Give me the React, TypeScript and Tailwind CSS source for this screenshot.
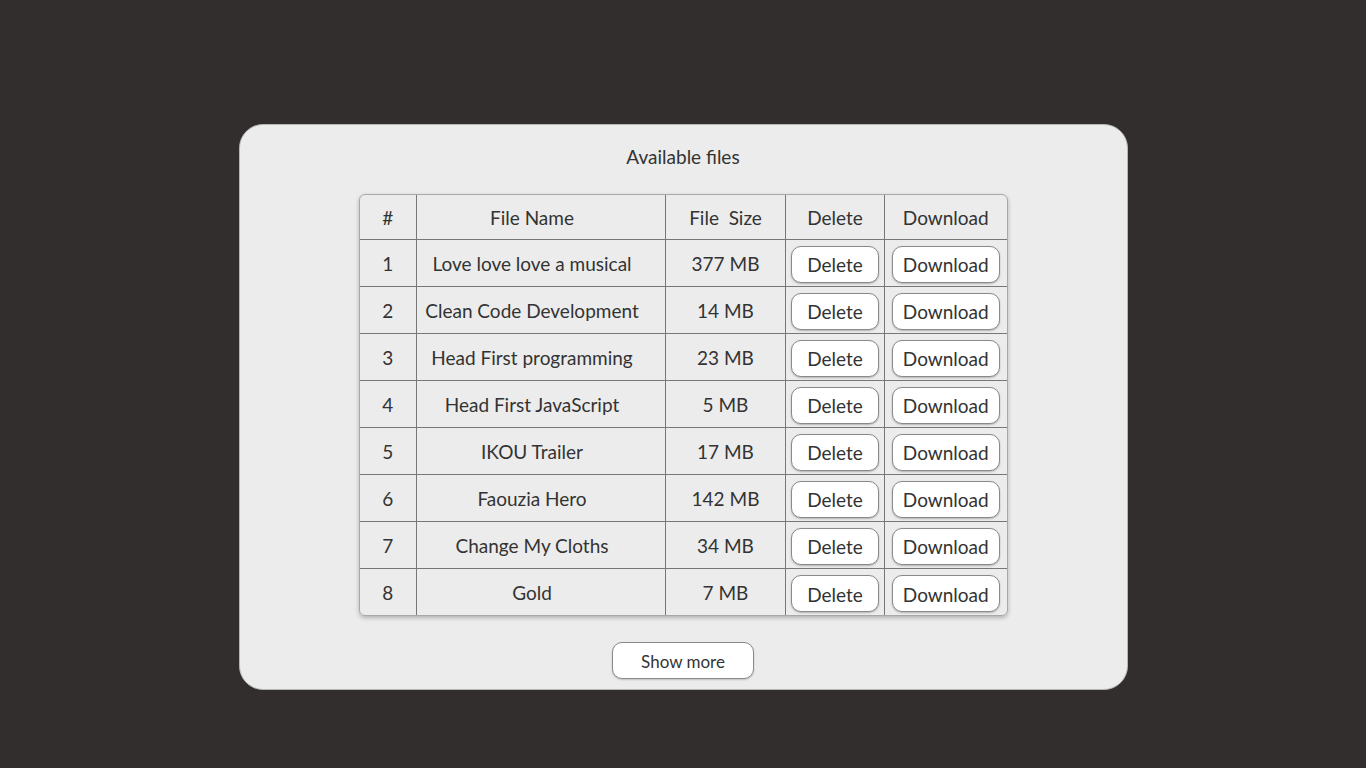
import React from 'react';

const files = [
  { id: 1, name: 'Love love love a musical', size: '377 MB' },
  { id: 2, name: 'Clean Code Development', size: '14 MB' },
  { id: 3, name: 'Head First programming', size: '23 MB' },
  { id: 4, name: 'Head First JavaScript', size: '5 MB' },
  { id: 5, name: 'IKOU Trailer', size: '17 MB' },
  { id: 6, name: 'Faouzia Hero', size: '142 MB' },
  { id: 7, name: 'Change My Cloths', size: '34 MB' },
  { id: 8, name: 'Gold', size: '7 MB' },
];

const btn = 'h-[37px] rounded-[10px] border border-[#8a8a8a] bg-white text-[19px] text-[#333] shadow-[0_1px_2px_rgba(0,0,0,0.25)]';

export default function App() {
  return (
    <main className="flex min-h-screen items-start justify-center bg-[#322e2d] pt-[124px] font-['Lato',sans-serif] text-[#333]">
      <section className="flex h-[566px] w-[889px] flex-col items-center rounded-[24px] border border-[#b5b5b5] bg-[#ececec]">
        <h1 className="mt-[19px] text-[19px] leading-[26px]">Available files</h1>
        <div className="mt-[24px] overflow-hidden rounded-[6px] border border-[#a8a8a8] shadow-[0_2px_4px_rgba(0,0,0,0.25)]">
          <table className="table-fixed border-collapse text-[19px]">
            <colgroup>
              <col className="w-[57px]" />
              <col className="w-[249px]" />
              <col className="w-[120px]" />
              <col className="w-[99px]" />
              <col className="w-[122px]" />
            </colgroup>
            <thead>
              <tr className="h-[44px]">
                <th className="border-r border-b border-[#777] pt-[3px] font-normal">#</th>
                <th className="border-r border-b border-[#777] pt-[3px] pr-[18px] font-normal">File Name</th>
                <th className="border-r border-b border-[#777] pt-[3px] font-normal whitespace-pre">File  Size</th>
                <th className="border-r border-b border-[#777] pt-[3px] font-normal">Delete</th>
                <th className="border-b border-[#777] pt-[3px] font-normal">Download</th>
              </tr>
            </thead>
            <tbody>
              {files.map((f, i) => {
                const last = i === files.length - 1;
                const b = last ? '' : 'border-b';
                return (
                  <tr key={f.id} className="h-[47px]">
                    <td className={`border-r ${b} border-[#777] pt-[3px] text-center`}>{f.id}</td>
                    <td className={`border-r ${b} border-[#777] pt-[3px] pr-[18px] text-center`}>{f.name}</td>
                    <td className={`border-r ${b} border-[#777] pt-[3px] text-center`}>{f.size}</td>
                    <td className={`border-r ${b} border-[#777] pt-[4px] text-center`}>
                      <button className={`${btn} w-[88px] pt-[2px]`}>Delete</button>
                    </td>
                    <td className={`${b} border-[#777] pt-[4px] text-center`}>
                      <button className={`${btn} w-[108px] pt-[2px]`}>Download</button>
                    </td>
                  </tr>
                );
              })}
            </tbody>
          </table>
        </div>
        <button className="mt-[26px] h-[37px] w-[142px] rounded-[10px] border border-[#8a8a8a] bg-white pt-[2px] text-[17px] text-[#333] shadow-[0_1px_2px_rgba(0,0,0,0.2)]">
          Show more
        </button>
      </section>
    </main>
  );
}
